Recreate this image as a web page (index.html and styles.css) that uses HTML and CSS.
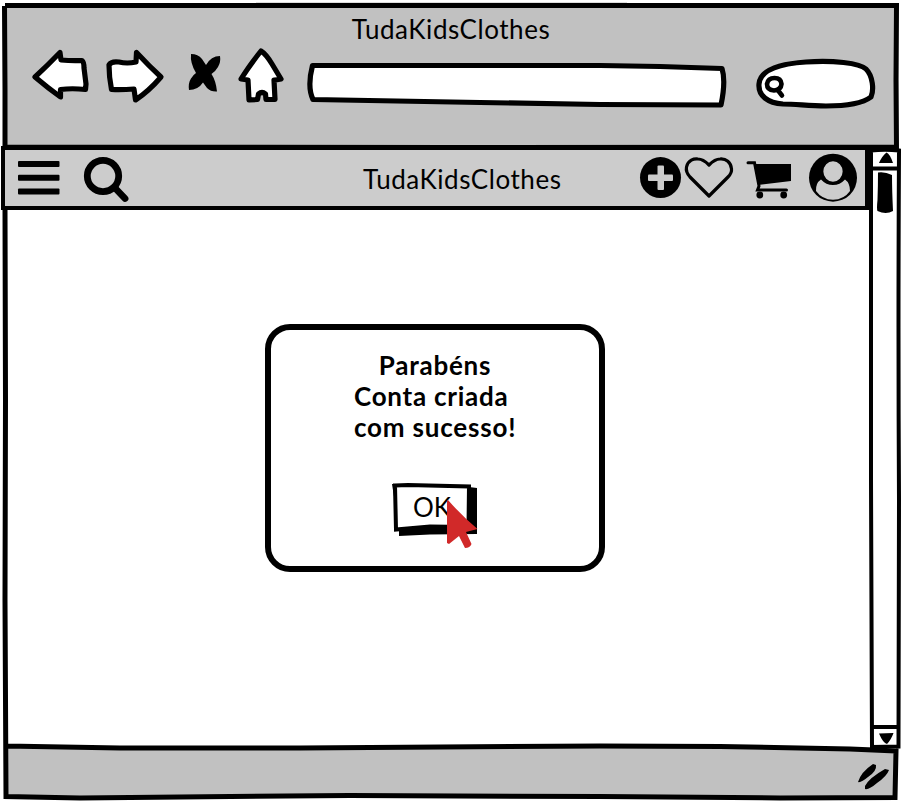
FILE: index.html
```html
<!DOCTYPE html>
<html lang="pt">
<head>
<meta charset="utf-8">
<title>TudaKidsClothes</title>
<link rel="stylesheet" href="styles.css">
</head>
<body>
<div class="window">
  <header class="chrome">
    <div class="window-title">TudaKidsClothes</div>
    <div class="toolbar">
      <svg class="ink back" viewBox="30 47 60 62"><path d="M35 77Q48 65 60 52.500L61 60Q72 61 82 60.500Q84 62 84 68Q85 76 86 84L85.500 89.500Q72 88 60.500 89.500L60.500 97Q48 88 35 77Z"/></svg>
      <svg class="ink forward" viewBox="104 47 62 62"><path d="M161 77Q149 66 136.500 52.500L136 62Q127 64 119 62Q111 61 109 65Q109 77 111.500 89.500Q122 90 134 89L135.500 100Q149 91 161 77Z"/></svg>
      <svg class="stop" viewBox="186 47 38 62"><path d="M191 54Q198 54 202 59L206 65Q211 56 220 56Q221 62 218 67Q215 72 211.500 74Q216 81 217 91.500Q211 92 207 88L203 82.500Q198 90 189 90Q188 83 191 78.500Q193 75 196 73Q190 63 191 54Z"/></svg>
      <svg class="ink home" viewBox="236 47 50 62"><path d="M261 51Q266 54 272 64L281 79Q277 80 274 80L275 99.500L266 99.500L265.500 94Q262 91 258.500 94L257.500 99.500L249 100L248 80L241 79Q249 66 261 51Z"/></svg>
      <svg class="ink address" viewBox="306 47 422 62"><path d="M312.500 65.500L440 65.500L600 65.500L660 66.500L722 68.500Q726 81 721 105L600 104.500L480 102.500L313 99.500Q307 87 312.500 65.500Z"/></svg>
      <svg class="ink find" viewBox="753 47 124 62"><path d="M783 104C768 103 758 96 759 84C760 71 777 64 806 62C832 60 860 63 866 69C873 76 874 90 871 97C863 103 848 106 826 106C808 106 797 104 783 104Z"/><path class="lens" d="M774.500 78Q781 78 781.500 84Q781 90 774 90.500Q767 90 767 84Q768 78 774.500 78ZM778.500 91L782 95.500"/></svg>
    </div>
  </header>

  <main class="content">
    <section class="page">
      <nav class="appbar">
        <svg class="menu-icon" viewBox="18 150 42 56"><rect x="18" y="161" width="41.500" height="6" rx="1"/><rect x="18" y="174.800" width="41.500" height="6" rx="1"/><rect x="18" y="188.500" width="41.500" height="6" rx="1"/></svg>
        <svg class="search-icon" viewBox="82 150 48 56"><ellipse cx="103" cy="176" rx="15.700" ry="15.600"/><path d="M115 188L125 198.500"/></svg>
        <h1 class="brand">TudaKidsClothes</h1>
        <svg class="plus-icon" viewBox="639 150 43 56"><circle cx="660.500" cy="177.600" r="20.500"/><rect x="657.500" y="165.500" width="6.500" height="24.500" rx="1"/><rect x="648" y="174.500" width="25" height="6.500" rx="1"/></svg>
        <svg class="heart-icon" viewBox="683 150 52 56"><path d="M709 196L690 177Q685.500 172 686.500 167C688 160 694 158.500 698 159C703 159 706 162 709 165C712 162 715 159 720 159C726 158.500 731 162 731.500 169Q732 173 728 177Z"/></svg>
        <svg class="cart-icon" viewBox="745 150 48 56"><path class="rail" d="M748 162.700H754.500L759 186L757.500 190H786.500"/><path d="M754.500 164H791V181L758 185Z"/><circle cx="759.800" cy="195" r="3.400"/><circle cx="783.700" cy="195" r="3.400"/></svg>
        <svg class="user-icon" viewBox="808 150 50 56"><circle cx="833" cy="177.700" r="24"/><path class="person" d="M821 179.500Q815.500 183 816 191Q822 199.500 833 199.800Q844 199.500 850 191Q850 183 845 179.500Q840 185 833 185Q826 185 821 179.500Z"/><ellipse class="head" cx="833" cy="171.500" rx="10.400" ry="11"/></svg>
      </nav>

      <section class="dialog">
        <h2 class="dialog-title">Parabéns</h2>
        <p class="dialog-text"><span class="line-one">Conta criada</span><br><span class="line-two">com sucesso!</span></p>
        <button class="ok">
          <svg class="ok-frame" viewBox="392 482 86 54"><path d="M469 487L477 488V534L430 534.500L399 536V528L392 484Z"/><path class="face" d="M395 485.500L408 485L469 486.500L468.500 527L430 526.500L396 529.500Z"/></svg>
          <span class="ok-label">OK</span>
          <svg class="cursor" viewBox="446 499 33 50"><path d="M448 500Q461 515 477.500 529L466 532L471.500 544Q470 548 465 548L459 536L449 544L447 543V501Z"/></svg>
        </button>
      </section>
    </section>

    <aside class="scrollbar">
      <svg viewBox="869 148 32 602"><path class="track" d="M871 150.500Q885 149 899 150.500Q898 330 899 500Q898.500 650 898.500 746.500L872 747Q871.500 620 871 480Q871.500 300 871 150.500Z"/><path class="rule" d="M871 168.500H898M871 727H898"/><path d="M886.500 152.500Q890 154 893 163L879 163Q882 156 886.500 152.500ZM878 172.500Q885 171.500 892 175Q892 190 893 211Q886 215 877.500 211Q876.500 209 877.500 200Q878 186 878 172.500ZM879 733.500L893.500 733Q891 740 887 744Q883 743 879 733.500Z"/></svg>
    </aside>
  </main>

  <footer class="status">
    <svg class="grip" viewBox="857 762 34 30"><path d="M858 782Q861 772 873 764L876 765Q877 771 868 777Q861 783 858 782ZM865 789L865 786Q869 778 885 769L889 770Q887 776 877 783Q869 790 865 789Z"/></svg>
  </footer>

  <svg class="outline" viewBox="0 0 901 803"><path class="fringe" d="M256 2.500H627M898.500 5V146"/><path d="M5 5.500H896.500L896 80L896.500 150M4.500 6L5 90V147M5 147L450 147.500L896 147M5 208L5.500 400L5 600L6 796.500L80 798L180 797L350 795.500L600 796.500L780 798L895 797.500L896 751L850 749L720 746.500L600 746L300 748L120 748L6 746"/></svg>
</div>
</body>
</html>
```
FILE: styles.css
```css
* { box-sizing: border-box; }

body {
  margin: 0;
  background: #fff;
  color: #000;
  font-family: Lato, "Liberation Sans", sans-serif;
}

svg { display: block; flex: none; overflow: visible; }

.window {
  position: relative;
  display: flex;
  flex-direction: column;
  width: 901px;
  height: 803px;
  overflow: hidden;
}

.chrome {
  height: 146px;
  margin: 0 4px 0 5px;
  background: linear-gradient(#fff 5px, #c1c1c1 5px);
}

.window-title {
  height: 47px;
  padding-top: 13px;
  text-align: center;
  font-size: 26px;
  line-height: 32px;
  letter-spacing: .55px;
}

.toolbar { display: flex; height: 62px; padding-left: 25px; }
.toolbar svg { height: 62px; }

.ink {
  fill: #fff;
  stroke: #000;
  stroke-width: 5.2;
  stroke-linecap: round;
  stroke-linejoin: round;
}

.back { width: 60px; }
.forward { width: 62px; margin-left: 14px; }
.stop { width: 38px; margin-left: 20px; }
.home { width: 50px; margin-left: 12px; }
.address { width: 422px; margin-left: 20px; }
.find { width: 124px; margin-left: 25px; }
.find .lens { stroke-width: 4.6; }

.content { display: flex; height: 602px; }
.page { width: 869px; }

.appbar {
  position: relative;
  z-index: 2;
  display: flex;
  width: 868px;
  height: 64px;
  margin-left: 1px;
  padding-left: 13px;
  border: 4px solid #000;
  background: #ccc;
}

.appbar svg { height: 56px; }
.menu-icon { width: 42px; }
.search-icon { width: 48px; margin-left: 22px; fill: none; stroke: #000; stroke-width: 6.8; stroke-linecap: round; }
.brand {
  width: 200px;
  margin: 0 76px 0 233px;
  font-size: 26px;
  font-weight: 400;
  line-height: 59px;
  letter-spacing: .55px;
}
.plus-icon { width: 43px; }
.plus-icon rect { fill: #ccc; }
.heart-icon { width: 52px; margin-left: 1px; fill: none; stroke: #000; stroke-width: 3.2; stroke-linejoin: round; }
.cart-icon { width: 48px; margin-left: 10px; }
.cart-icon .rail { fill: none; stroke: #000; stroke-width: 3; stroke-linecap: round; }
.user-icon { width: 50px; margin-left: 15px; }
.user-icon .person { fill: #ccc; }
.user-icon .head { fill: #ccc; stroke: #000; stroke-width: 1.5; }

.dialog {
  display: flex;
  flex-direction: column;
  align-items: center;
  width: 340px;
  height: 248px;
  margin: 114px 0 0 265px;
  padding-top: 19px;
  border: 6px solid #000;
  border-radius: 25px;
  background: #fff;
}

.dialog-title, .dialog-text {
  margin: 0;
  font-size: 26px;
  font-weight: 700;
}

.dialog-title { line-height: 32px; letter-spacing: .75px; }
.dialog-text { width: 162px; line-height: 31px; white-space: nowrap; }
.line-one { letter-spacing: .75px; }
.line-two { letter-spacing: .8px; }

.ok {
  position: relative;
  width: 86px;
  height: 54px;
  margin: 39px 0 0;
  padding: 0;
  border: 0;
  background: none;
  color: #000;
  font: 26px/54px Lato, "Liberation Sans", sans-serif;
}

.ok-frame { position: absolute; inset: 0; width: 86px; height: 54px; }
.ok-frame .face { fill: #fff; stroke: #000; stroke-width: 4; }
.ok-label { position: absolute; left: 21px; top: -2px; }
.cursor { position: absolute; left: 54px; top: 17px; width: 33px; height: 50px; fill: #d12929; }

.scrollbar { width: 32px; padding-top: 2px; }
.scrollbar svg { width: 32px; height: 602px; }
.scrollbar .track { fill: #fff; stroke: #000; stroke-width: 4; }
.scrollbar .rule { stroke: #000; stroke-width: 4; }

.status {
  display: flex;
  justify-content: flex-end;
  height: 49px;
  margin: 0 5px 0 6px;
  padding: 14px 5px 0 0;
  background: #c1c1c1;
}

.grip { width: 34px; height: 30px; }

.outline { position: absolute; inset: 0; width: 901px; height: 803px; pointer-events: none; fill: none; stroke: #000; stroke-width: 5; }
.outline .fringe { stroke: #ddd; stroke-width: 1; }
```
